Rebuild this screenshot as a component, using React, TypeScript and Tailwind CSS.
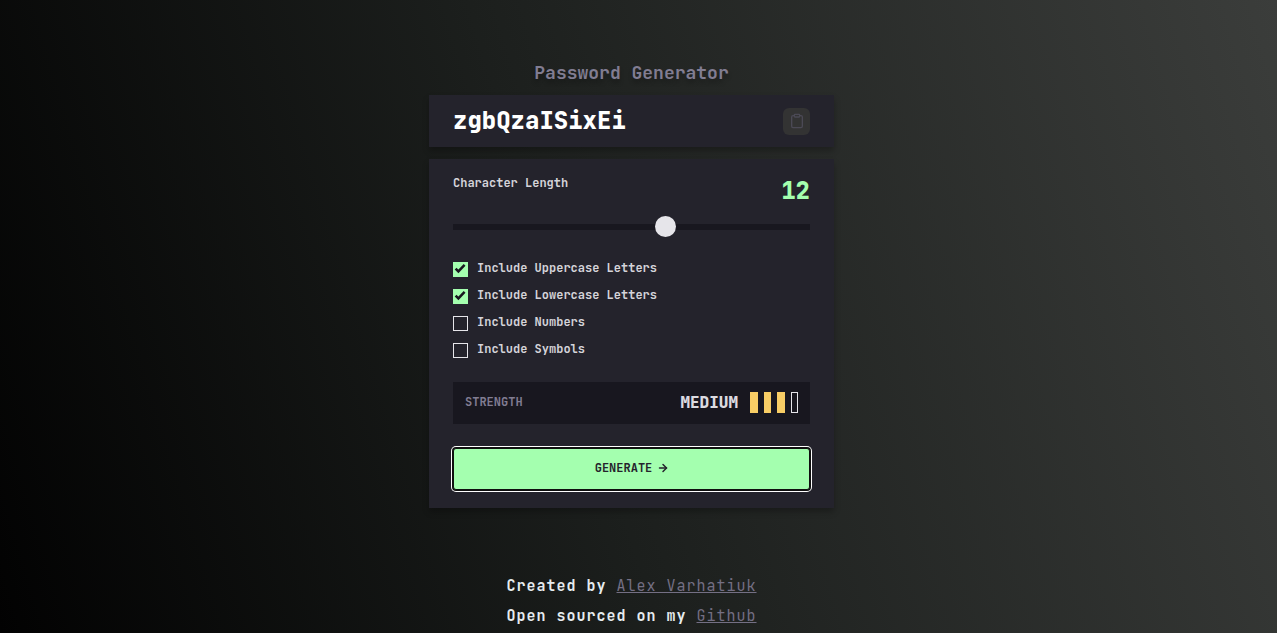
import { useState } from "react";
import { ArrowRight, Clipboard } from "lucide-react";

const labels = [
  "Include Uppercase Letters",
  "Include Lowercase Letters",
  "Include Numbers",
  "Include Symbols",
];

function Option({ label, checked, onChange }: { label: string; checked: boolean; onChange: () => void }) {
  return (
    <label className="flex h-[15px] items-start gap-[9px] text-xs leading-3 font-bold text-[#d5d4da]">
      <span className="grid size-[15px] shrink-0">
        <input
          type="checkbox"
          checked={checked}
          onChange={onChange}
          className="col-start-1 row-start-1 size-[15px] appearance-none border border-[#e6e5ea] checked:border-[#a4ffaf] checked:bg-[#a4ffaf]"
        />
        {checked && (
          <svg viewBox="0 0 15 15" className="pointer-events-none col-start-1 row-start-1 size-[15px]" aria-hidden="true">
            <path d="M2.6 6.6 5.4 9.4 11.6 2.8" fill="none" stroke="#18171f" strokeWidth="2.5" />
          </svg>
        )}
      </span>
      {label}
    </label>
  );
}

export default function App() {
  const [length, setLength] = useState(12);
  const [options, setOptions] = useState([true, true, false, false]);

  return (
    <div className="flex min-h-screen flex-col items-center bg-[linear-gradient(73deg,#020202_0%,#1c1f1d_45%,#3b3d3b_100%)] pt-[61px] pr-[14px] font-['JetBrains_Mono','DejaVu_Sans_Mono',monospace]">
      <main className="w-full max-w-[405px]">
        <h1 className="mb-2.5 text-center text-lg leading-6 font-bold text-[#817d92] [text-shadow:0_4px_4px_rgba(0,0,0,0.25)]">
          Password Generator
        </h1>
        <section className="flex h-[52px] items-center justify-between bg-[#24232c] px-6 shadow-[0_4px_6px_rgba(0,0,0,0.25)]">
          <output className="text-2xl font-extrabold text-white">zgbQzaISixEi</output>
          <button type="button" aria-label="Copy password" className="grid size-[27px] place-items-center rounded-md bg-[#333333] text-[#4b4955]">
            <Clipboard size={16} />
          </button>
        </section>
        <section className="mt-3 bg-[#24232c] px-6 pt-4 pb-[18px] shadow-[0_4px_6px_rgba(0,0,0,0.25)]">
          <div className="flex items-start justify-between">
            <label htmlFor="length" className="text-xs leading-4 font-bold text-[#d5d4da]">
              Character Length
            </label>
            <span className="text-2xl leading-8 font-extrabold text-[#a4ffaf]">{length}</span>
          </div>
          <input
            id="length"
            type="range"
            min={0}
            max={20}
            value={length}
            onChange={(e) => setLength(Number(e.target.value))}
            className="mt-[9px] block h-[21px] w-full appearance-none bg-transparent [&::-webkit-slider-runnable-track]:h-[6px] [&::-webkit-slider-runnable-track]:bg-[#18171f] [&::-webkit-slider-thumb]:-mt-2 [&::-webkit-slider-thumb]:size-[21px] [&::-webkit-slider-thumb]:appearance-none [&::-webkit-slider-thumb]:rounded-full [&::-webkit-slider-thumb]:bg-[#e6e5ea]"
          />
          <div className="mt-[25px] flex flex-col gap-3">
            {labels.map((label, i) => (
              <Option
                key={label}
                label={label}
                checked={options[i]}
                onChange={() => setOptions(options.map((on, j) => (j === i ? !on : on)))}
              />
            ))}
          </div>
          <div className="mt-6 flex h-[42px] items-start justify-between bg-[#18171f] px-3 pt-2.5">
            <span className="text-xs leading-5 font-semibold text-[#817d92]">STRENGTH</span>
            <div className="flex items-start gap-3">
              <span className="text-base leading-[22px] font-extrabold text-[#dcdbe0]">MEDIUM</span>
              <div className="grid h-[21px] w-12 grid-cols-4 gap-1.5">
                <span className="bg-[#f8cd65]" />
                <span className="bg-[#f8cd65]" />
                <span className="bg-[#f8cd65]" />
                <span className="border border-[#e6e5ea]" />
              </div>
            </div>
          </div>
          <button
            type="button"
            className="mt-6 flex h-[42px] w-full items-center justify-center gap-1.5 rounded-[3px] border border-[#101010] bg-[#a4ffaf] pb-0.5 text-xs font-semibold text-[#24232c] shadow-[0_0_0_1px_#101010,0_0_0_2px_#ffffff]"
          >
            GENERATE
            <ArrowRight size={12} strokeWidth={3} className="-mx-px" />
          </button>
        </section>
      </main>
      <footer className="mt-[63px] text-[15px] leading-[30px] font-semibold tracking-[1px] text-[#e6ecef]">
        <p>
          Created by{" "}
          <a href="#author" className="font-normal text-[#746f84] underline">
            Alex Varhatiuk
          </a>
        </p>
        <p>
          Open sourced on my{" "}
          <a href="#github" className="font-normal text-[#746f84] underline">
            Github
          </a>
        </p>
      </footer>
    </div>
  );
}
